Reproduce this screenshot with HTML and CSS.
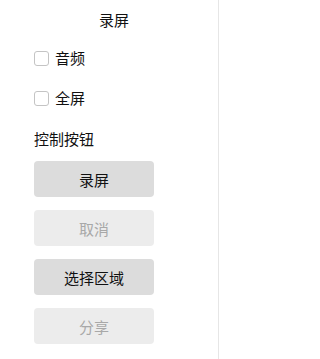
FILE: index.html
```html
<!DOCTYPE html>
<html lang="zh">
<head>
<meta charset="utf-8">
<title>录屏</title>
<link rel="stylesheet" href="styles.css">
</head>
<body>
<div class="panel">
  <div class="title">录屏</div>
  <label class="check"><span class="box"></span><span class="label">音频</span></label>
  <label class="check"><span class="box"></span><span class="label">全屏</span></label>
  <div class="section">控制按钮</div>
  <div class="buttons">
    <button class="btn">录屏</button>
    <button class="btn" disabled>取消</button>
    <button class="btn">选择区域</button>
    <button class="btn" disabled>分享</button>
  </div>
</div>
</body>
</html>
```
FILE: styles.css
```css
html, body {
  margin: 0;
  padding: 0;
  background: #ffffff;
}
body {
  font-family: "Noto Sans CJK SC", "Noto Sans", sans-serif;
  font-size: 15px;
  color: #111111;
}
.panel {
  box-sizing: border-box;
  width: 219px;
  height: 359px;
  border-right: 1px solid #e6e6e6;
  padding: 10px 24px 0 34px;
  display: flex;
  flex-direction: column;
}
.title {
  text-align: center;
  line-height: 20px;
  height: 20px;
}
.check {
  display: flex;
  align-items: center;
  gap: 6px;
  height: 16px;
  margin-top: 20px;
}
.check + .check {
  margin-top: 24px;
}
.box {
  box-sizing: border-box;
  width: 15px;
  height: 15px;
  border: 1px solid #c4c4c4;
  border-radius: 3px;
  background: #fff;
}
.label {
  line-height: 16px;
}
.section {
  margin-top: 23px;
  line-height: 20px;
}
.buttons {
  display: flex;
  flex-direction: column;
  gap: 13px;
  margin-top: 12px;
}
.btn {
  width: 120px;
  height: 36px;
  border: none;
  border-radius: 4px;
  background: #dcdcdc;
  color: #111111;
  font-family: inherit;
  font-size: 15px;
  padding: 0;
}
.btn:disabled {
  background: #ececec;
  color: #a8a8a8;
}
```
